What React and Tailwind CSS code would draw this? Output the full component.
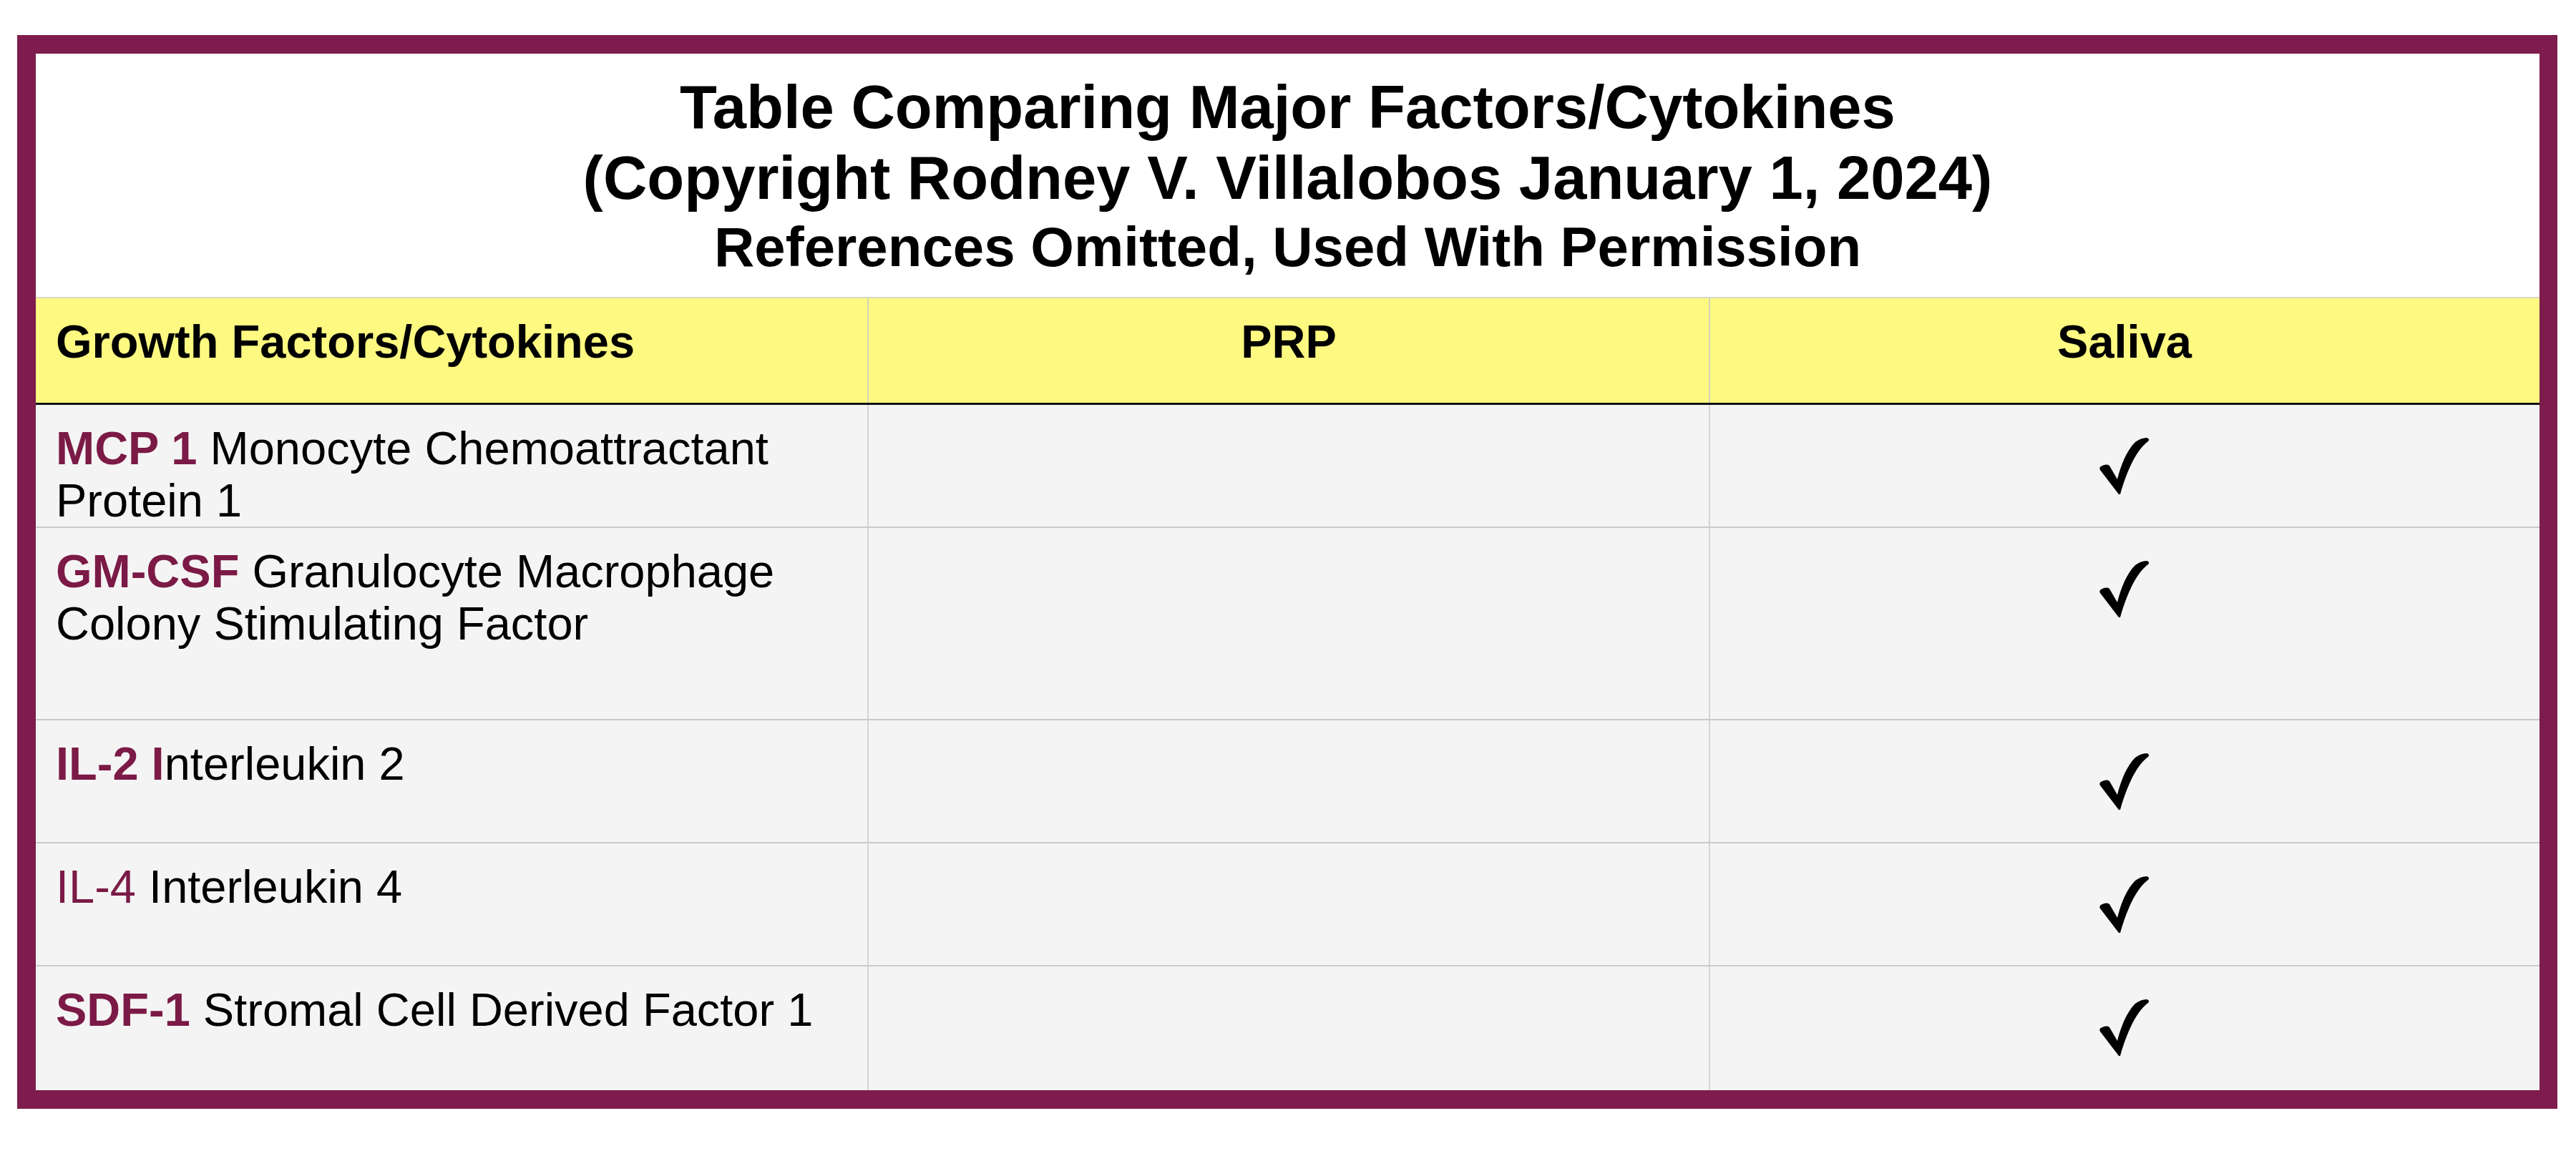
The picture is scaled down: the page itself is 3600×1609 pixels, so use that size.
import React from "react";

const MAROON = "text-[#7b1a46]";

function Check() {
  return (
    <svg width="70" height="80" viewBox="0 0 70 80" className="block">
      <path
        d="M27 79 L1 45 Q-1 41 3 39.5 Q10 36 14 39 L25 58 C30 38 38 18 50 6 Q58 0 66 0 Q71 1 68 5 C56 14 42 34 29 79 Z"
        fill="#000"
      />
    </svg>
  );
}

const rows = [
  {
    h: "h-[172px]",
    label: (
      <>
        <span className={`font-bold ${MAROON}`}>MCP 1</span> Monocyte Chemoattractant Protein 1
      </>
    ),
  },
  {
    h: "h-[269px]",
    label: (
      <>
        <span className={`font-bold ${MAROON}`}>GM-CSF</span> Granulocyte Macrophage Colony Stimulating Factor
      </>
    ),
  },
  {
    h: "h-[172px]",
    label: (
      <>
        <span className={`font-bold ${MAROON}`}>IL-2 I</span>nterleukin 2
      </>
    ),
  },
  {
    h: "h-[172px]",
    label: (
      <>
        <span className={MAROON}>IL-4</span> Interleukin 4
      </>
    ),
  },
  {
    h: "h-[173px]",
    label: (
      <>
        <span className={`font-bold ${MAROON}`}>SDF-1</span> Stromal Cell Derived Factor 1
      </>
    ),
    last: true,
  },
];

export default function App() {
  return (
    <div
      className="w-[3600px] h-[1609px] bg-white pt-[49px] pl-[24px] text-black"
      style={{ fontFamily: '"Liberation Sans", Arial, sans-serif' }}
    >
      <div className="w-[3550px] border-[26px] border-[#7e1c4d] border-r-[25px] shadow-[inset_0_0_0_1px_#5e0a30]">
        {/* Title */}
        <div className="h-[340px] bg-white pt-[25px] flex flex-col items-center font-bold">
          <div className="text-[85px] leading-[99px]">Table Comparing Major Factors/Cytokines</div>
          <div className="text-[85px] leading-[99px]">(Copyright Rodney V. Villalobos January 1, 2024)</div>
          <div className="text-[78px] leading-[94px]">References Omitted, Used With Permission</div>
        </div>

        {/* Header */}
        <div className="grid grid-cols-[1162px_1176px_1160px] h-[151px] bg-[#fdf981] border-t-2 border-t-[#d9d6c6] border-b-[3px] border-b-[#111] font-bold text-[65px] leading-[73px]">
          <div className="pl-[28px] pt-[24px]">Growth Factors/Cytokines</div>
          <div className="border-l-2 border-l-[#d6d4b8] pt-[24px] text-center">PRP</div>
          <div className="border-l-2 border-l-[#d6d4b8] pt-[24px] text-center">Saliva</div>
        </div>

        {/* Rows */}
        {rows.map((r, i) => (
          <div
            key={i}
            className={`grid grid-cols-[1162px_1176px_1160px] ${r.h} bg-[#f4f4f4] text-[65px] leading-[73px] ${
              r.last ? "" : "border-b-2 border-b-[#cacaca]"
            }`}
          >
            <div className="pl-[28px] pr-[40px] pt-[24px]">{r.label}</div>
            <div className="border-l-2 border-l-[#d4d4d4]" />
            <div className="border-l-2 border-l-[#d4d4d4] flex justify-center pt-[46px]">
              <Check />
            </div>
          </div>
        ))}
      </div>
    </div>
  );
}
